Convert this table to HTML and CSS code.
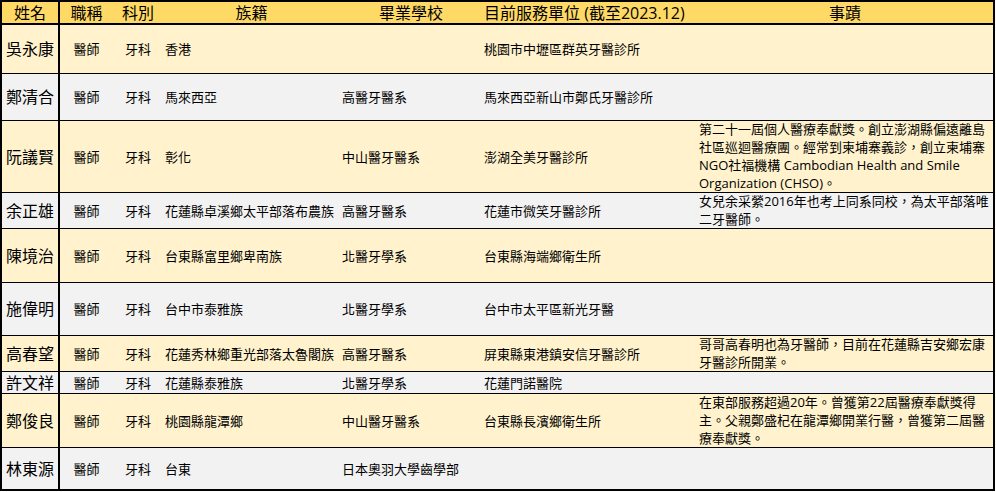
FILE: index.html
```html
<!DOCTYPE html>
<html lang="zh-Hant">
<head>
<meta charset="utf-8">
<title>牙醫師名錄</title>
<link rel="stylesheet" href="styles.css">
</head>
<body>
<div class="sheet">
  <div class="row head">
    <div class="c name">姓名</div>
    <div class="c ctr">職稱</div>
    <div class="c ctr">科別</div>
    <div class="c ctr">族籍</div>
    <div class="c ctr">畢業學校</div>
    <div class="c">目前服務單位 (截至2023.12)</div>
    <div class="c ctr">事蹟</div>
  </div>
  <div class="row odd">
    <div class="c name">吳永康</div>
    <div class="c ctr">醫師</div>
    <div class="c ctr">牙科</div>
    <div class="c">香港</div>
    <div class="c"></div>
    <div class="c">桃園市中壢區群英牙醫診所</div>
    <div class="c"></div>
  </div>
  <div class="row even">
    <div class="c name">鄭清合</div>
    <div class="c ctr">醫師</div>
    <div class="c ctr">牙科</div>
    <div class="c">馬來西亞</div>
    <div class="c">高醫牙醫系</div>
    <div class="c">馬來西亞新山市鄭氏牙醫診所</div>
    <div class="c"></div>
  </div>
  <div class="row odd">
    <div class="c name">阮議賢</div>
    <div class="c ctr">醫師</div>
    <div class="c ctr">牙科</div>
    <div class="c">彰化</div>
    <div class="c">中山醫牙醫系</div>
    <div class="c">澎湖全美牙醫診所</div>
    <div class="c notes">
      <span>第二十一屆個人醫療奉獻獎。創立澎湖縣偏遠離島</span>
      <span>社區巡迴醫療團。經常到柬埔寨義診，創立柬埔寨</span>
      <span>NGO社福機構 Cambodian Health and Smile</span>
      <span>Organization (CHSO)。</span>
    </div>
  </div>
  <div class="row even">
    <div class="c name">余正雄</div>
    <div class="c ctr">醫師</div>
    <div class="c ctr">牙科</div>
    <div class="c">花蓮縣卓溪鄉太平部落布農族</div>
    <div class="c">高醫牙醫系</div>
    <div class="c">花蓮市微笑牙醫診所</div>
    <div class="c notes">
      <span>女兒余采縈2016年也考上同系同校，為太平部落唯</span>
      <span>二牙醫師。</span>
    </div>
  </div>
  <div class="row odd">
    <div class="c name">陳境治</div>
    <div class="c ctr">醫師</div>
    <div class="c ctr">牙科</div>
    <div class="c">台東縣富里鄉卑南族</div>
    <div class="c">北醫牙學系</div>
    <div class="c">台東縣海端鄉衛生所</div>
    <div class="c"></div>
  </div>
  <div class="row even">
    <div class="c name">施偉明</div>
    <div class="c ctr">醫師</div>
    <div class="c ctr">牙科</div>
    <div class="c">台中市泰雅族</div>
    <div class="c">北醫牙學系</div>
    <div class="c">台中市太平區新光牙醫</div>
    <div class="c"></div>
  </div>
  <div class="row odd">
    <div class="c name">高春望</div>
    <div class="c ctr">醫師</div>
    <div class="c ctr">牙科</div>
    <div class="c">花蓮秀林鄉重光部落太魯閣族</div>
    <div class="c">高醫牙醫系</div>
    <div class="c">屏東縣東港鎮安信牙醫診所</div>
    <div class="c notes">
      <span>哥哥高春明也為牙醫師，目前在花蓮縣吉安鄉宏康</span>
      <span>牙醫診所開業。</span>
    </div>
  </div>
  <div class="row even">
    <div class="c name">許文祥</div>
    <div class="c ctr">醫師</div>
    <div class="c ctr">牙科</div>
    <div class="c">花蓮縣泰雅族</div>
    <div class="c">北醫牙學系</div>
    <div class="c">花蓮門諾醫院</div>
    <div class="c"></div>
  </div>
  <div class="row odd">
    <div class="c name">鄭俊良</div>
    <div class="c ctr">醫師</div>
    <div class="c ctr">牙科</div>
    <div class="c">桃園縣龍潭鄉</div>
    <div class="c">中山醫牙醫系</div>
    <div class="c">台東縣長濱鄉衛生所</div>
    <div class="c notes">
      <span>在東部服務超過20年。曾獲第22屆醫療奉獻獎得</span>
      <span>主。父親鄭盛杞在龍潭鄉開業行醫，曾獲第二屆醫</span>
      <span>療奉獻獎。</span>
    </div>
  </div>
  <div class="row even last">
    <div class="c name">林東源</div>
    <div class="c ctr">醫師</div>
    <div class="c ctr">牙科</div>
    <div class="c">台東</div>
    <div class="c">日本奧羽大學齒學部</div>
    <div class="c"></div>
    <div class="c"></div>
  </div>
</div>
</body>
</html>
```

FILE: styles.css
```css
* {
  box-sizing: border-box;
}

html, body {
  margin: 0;
  padding: 0;
  background: #ffffff;
}

body {
  font-family: "Open Sans", "Noto Sans CJK TC", sans-serif;
  color: #000000;
}

.sheet {
  width: 995px;
  border: 2px solid #000000;
  display: grid;
  grid-template-rows: 23px 49px 47px 72px 36px 54px 53px 36px 22px 54px 41px;
}

.row {
  display: grid;
  grid-template-columns: 58px 53px 50px 177px 142px 215px 1fr;
  border-bottom: 1px solid #000000;
  min-height: 0;
}

.row.last {
  border-bottom: none;
}

.head {
  background: #ffd966;
  border-bottom: 2px solid #000000;
}

.odd {
  background: #fff2cc;
}

.even {
  background: #f2f2f2;
}

.c {
  display: flex;
  align-items: center;
  padding-left: 2px;
  font-size: 13px;
  line-height: 16px;
  white-space: nowrap;
  min-width: 0;
}

.head .c {
  font-size: 16px;
  line-height: 18px;
}

.name {
  justify-content: center;
  padding-left: 0;
  font-size: 16px;
  line-height: 18px;
  border-right: 2px solid #000000;
}

.ctr {
  justify-content: center;
  padding-left: 0;
}

.notes {
  flex-direction: column;
  align-items: flex-start;
  justify-content: space-between;
  line-height: 15px;
  padding-top: 1px;
  padding-bottom: 1px;
}
```
